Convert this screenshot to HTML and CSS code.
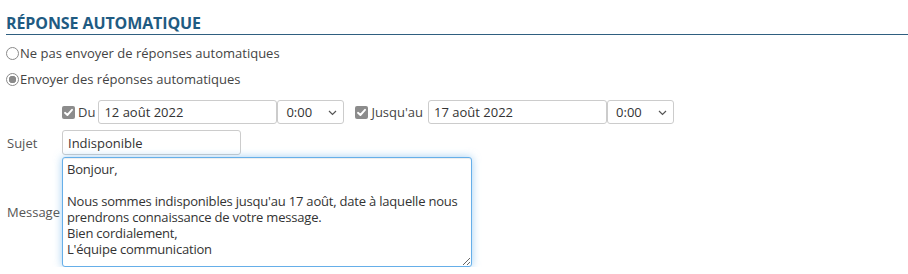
FILE: index.html
```html
<!DOCTYPE html>
<html lang="fr">
<head>
	<meta charset="utf-8">
	<title>Réponse automatique</title>
	<link rel="stylesheet" href="styles.css">
</head>
<body>
	<div class="section">
		<h2 class="section-title">RÉPONSE AUTOMATIQUE</h2>

		<label class="radio-row first">
			<input type="radio" name="mode" class="radio">Ne pas envoyer de réponses automatiques
		</label>
		<label class="radio-row">
			<input type="radio" name="mode" class="radio" checked>Envoyer des réponses automatiques
		</label>

		<div class="form-row period">
			<span class="field-label"></span>
			<label class="check-label">
				<span class="check-box"><svg width="11" height="11" viewBox="0 0 11 11"><path d="M2 5.8 L4.4 8 L9 2.8" fill="none" stroke="#fff" stroke-width="1.9" stroke-linecap="round" stroke-linejoin="round"/></svg></span>Du
			</label>
			<input type="text" class="text-input date" value="12 août 2022">
			<div class="select-wrap">
				<select class="time-select"><option>0:00</option></select>
				<svg class="chevron" width="9" height="6" viewBox="0 0 9 6"><path d="M1 1 L4.5 4.5 L8 1" fill="none" stroke="#555" stroke-width="1.2"/></svg>
			</div>

			<label class="check-label second">
				<span class="check-box"><svg width="11" height="11" viewBox="0 0 11 11"><path d="M2 5.8 L4.4 8 L9 2.8" fill="none" stroke="#fff" stroke-width="1.9" stroke-linecap="round" stroke-linejoin="round"/></svg></span>Jusqu'au
			</label>
			<input type="text" class="text-input date" value="17 août 2022">
			<div class="select-wrap">
				<select class="time-select"><option>0:00</option></select>
				<svg class="chevron" width="9" height="6" viewBox="0 0 9 6"><path d="M1 1 L4.5 4.5 L8 1" fill="none" stroke="#555" stroke-width="1.2"/></svg>
			</div>
		</div>

		<div class="form-row subject-row">
			<label class="field-label">Sujet</label>
			<input type="text" class="text-input subject" value="Indisponible">
		</div>

		<div class="form-row message-row">
			<label class="field-label">Message</label>
			<textarea class="message is-focused">Bonjour,

Nous sommes indisponibles jusqu'au 17 août, date à laquelle nous prendrons connaissance de votre message.
Bien cordialement,
L'équipe communication</textarea>
		</div>
	</div>
</body>
</html>
```

FILE: styles.css
```css
body{
	margin: 0;
	background: #fff;
	font-family: "Open Sans", "Noto Sans", sans-serif;
	font-size: 13px;
	color: #444;
}
.section{
	padding: 13px 0 0 6px;
}
.section-title{
	margin: 0;
	font-size: 16px;
	line-height: 21px;
	font-weight: 700;
	letter-spacing: -0.1px;
	color: #1f5b82;
	border-bottom: 1px solid #2f5f80;
}

.radio-row{
	display: flex;
	align-items: center;
	height: 26px;
}
.radio-row.first{
	margin-top: 5px;
}
.radio{
	appearance: none;
	width: 13px;
	height: 13px;
	margin: 0 1px 0 0;
	border: 1.5px solid #8a8a8a;
	border-radius: 50%;
	background: #fff;
}
.radio:checked{
	background: radial-gradient(circle, #8a8a8a 0 3.5px, #fff 4px);
}

.form-row{
	display: flex;
	align-items: center;
}
.field-label{
	flex: 0 0 55px;
	padding-left: 1px;
	color: #555;
}

.period{
	height: 24px;
	margin-top: 8px;
}
.check-label{
	display: flex;
	align-items: center;
	margin-right: 3px;
}
.check-label.second{
	margin-left: 11px;
	margin-right: 5px;
}
.check-box{
	display: flex;
	align-items: center;
	justify-content: center;
	width: 13px;
	height: 13px;
	margin-right: 3px;
	border-radius: 2px;
	background: #8c8c8c;
}

.text-input{
	box-sizing: border-box;
	height: 24px;
	padding: 0 5px;
	border: 1px solid #ccc;
	border-radius: 3px;
	font: inherit;
	color: #333;
	background: #fff;
}
.date{
	width: 179px;
}
.select-wrap{
	position: relative;
	display: flex;
}
.time-select{
	appearance: none;
	box-sizing: border-box;
	width: 67px;
	height: 24px;
	padding: 0 4px 0 8px;
	border: 1px solid #ccc;
	border-radius: 3px;
	font: inherit;
	color: #333;
	background: #fff;
}
.chevron{
	position: absolute;
	right: 7px;
	top: 10px;
	pointer-events: none;
}

.subject-row{
	margin-top: 6px;
}
.subject{
	width: 179px;
	height: 25px;
}

.message-row{
	margin-top: 2px;
}
.message{
	box-sizing: border-box;
	width: 410px;
	height: 110px;
	padding: 3px 4px;
	border: 1px solid #ccc;
	border-radius: 3px;
	font: inherit;
	line-height: 16px;
	letter-spacing: -0.2px;
	color: #333;
	resize: both;
}
.message.is-focused{
	border-color: #66afe9;
	box-shadow: inset 0 1px 1px rgba(0,0,0,.075), 0 0 8px rgba(102,175,233,.6);
	outline: none;
}
```
